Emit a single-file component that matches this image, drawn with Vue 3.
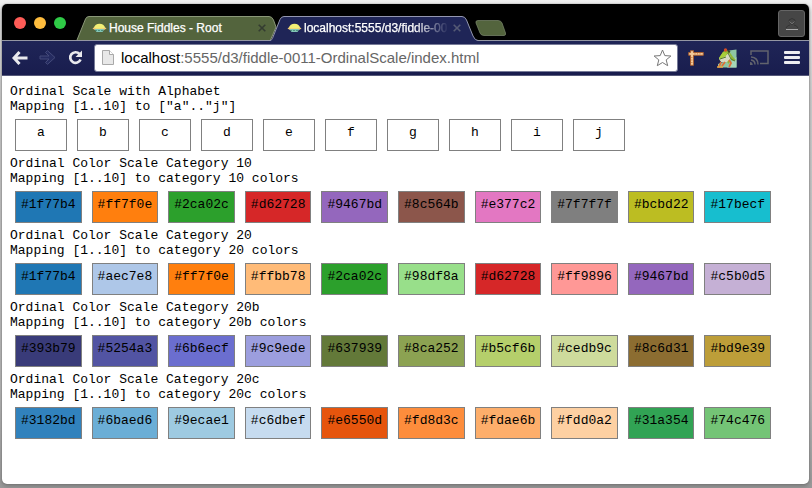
<script setup>
const letters = ['a', 'b', 'c', 'd', 'e', 'f', 'g', 'h', 'i', 'j']
const sections = [
  { name: '10', colors: ['#1f77b4', '#ff7f0e', '#2ca02c', '#d62728', '#9467bd', '#8c564b', '#e377c2', '#7f7f7f', '#bcbd22', '#17becf'] },
  { name: '20', colors: ['#1f77b4', '#aec7e8', '#ff7f0e', '#ffbb78', '#2ca02c', '#98df8a', '#d62728', '#ff9896', '#9467bd', '#c5b0d5'] },
  { name: '20b', colors: ['#393b79', '#5254a3', '#6b6ecf', '#9c9ede', '#637939', '#8ca252', '#b5cf6b', '#cedb9c', '#8c6d31', '#bd9e39'] },
  { name: '20c', colors: ['#3182bd', '#6baed6', '#9ecae1', '#c6dbef', '#e6550d', '#fd8d3c', '#fdae6b', '#fdd0a2', '#31a354', '#74c476'] }
]
const tabs = [
  { title: 'House Fiddles - Root', active: false },
  { title: 'localhost:5555/d3/fiddle-00', active: true }
]
</script>

<template>
  <div class="desktop">
    <div class="window">
      <header class="tabstrip">
        <div class="lights">
          <i class="light red"></i><i class="light yellow"></i><i class="light green"></i>
        </div>
        <div v-for="t in tabs" :key="t.title" class="tab" :class="{ active: t.active }">
          <svg class="tab-shape" width="207" height="26" viewBox="0 0 207 26">
            <template v-if="t.active">
              <path class="fill" d="M-2 24.500C-.5 24.500 .3 23 1 21L8 3.500Q9.200 .5 12 .5H190Q193 .5 194.500 4L201 20Q203 24.500 206 24.500V26H-2Z" />
              <path class="edge" d="M-2 24.500C-.5 24.500 .3 23 1 21L8 3.500Q9.200 .5 12 .5H190Q193 .5 194.500 4L201 20Q203 24.500 206 24.500" />
            </template>
            <template v-else>
              <path class="fill" d="M0 24L8.500 3Q9.500 .5 12 .5H192Q195 .5 196.500 4L199 11L193.500 24Z" />
              <path class="edge" d="M0 24L8.500 3Q9.500 .5 12 .5H192Q195 .5 196.500 4L199 11L193.500 24" />
            </template>
          </svg>
          <div class="tab-body">
            <svg class="favicon" width="15" height="10" viewBox="0 0 15 10">
              <path d="M.5 5.500L3 3.500H12L14.500 5.500L12 7H3Z" fill="#f1c777" />
              <path d="M2 4.500Q3 .8 7.500 .7Q12 .8 13 4.500L11 5.500H4Z" fill="#f2ef75" />
              <path d="M2.500 6H12.500L10.500 9H4.500Z" fill="#83c6b7" />
              <path d="M3 7.500H12" stroke="#397b68" stroke-width=".7" stroke-dasharray="2 1" />
            </svg>
            <span class="title">{{ t.title }}</span>
            <svg class="close" width="8" height="8" viewBox="0 0 8 8"><path d="M.7 .7L7.300 7.300M7.300 .7L.7 7.300" /></svg>
          </div>
        </div>
        <svg class="new-tab" width="32" height="16" viewBox="0 0 32 16">
          <path d="M3 .5H23Q26 .5 27 3L30.500 13Q31 15.500 29 15.500H9Q6 15.500 5 13L1 3Q.3 .5 3 .5Z" fill="#53643d" stroke="#7d8a6e" stroke-width=".7" />
        </svg>
        <div class="profile">
          <svg width="14" height="14" viewBox="0 0 14 14">
            <path d="M4 3Q7 0 10 3L9.500 6Q7 9 4.500 6ZM1 11Q2 8.500 5 8M9 8Q12 8.500 13 11" fill="none" stroke="#353535" />
            <path d="M4.500 4.500Q7 8.500 9.500 4.500" fill="none" stroke="#777" /><path d="M1 12.500H13" stroke="#aaa" />
          </svg>
        </div>
      </header>

      <nav class="toolbar">
        <svg class="back" width="16" height="14" viewBox="0 0 16 14"><path d="M7.500 1L2 7L7.500 13M2.500 7H15.500" fill="none" stroke="#e9e9ee" stroke-width="3" /></svg>
        <svg class="forward" width="17" height="15" viewBox="0 0 17 15"><path d="M1 6H10L6.500 2.500L8.500 .7L16 7.500L8.500 14.300L6.500 12.500L10 9H1Z" fill="#252b60" stroke="#454b7b" /></svg>
        <svg class="reload" width="15" height="15" viewBox="0 0 15 15"><path d="M11.500 4A5.300 5.300 0 1 0 12.500 9.500" fill="none" stroke="#e9e9ee" stroke-width="2.700" /><path d="M14 .5V7H7.500Z" fill="#e9e9ee" /></svg>
        <div class="address">
          <svg class="page-icon" width="12" height="15" viewBox="0 0 12 15"><path d="M.5 .5H7.500L11.500 4.500V14.500H.5Z" fill="#e8e8e8" stroke="#a9a9a9" /><path d="M7.500 .5V4.500H11.500" fill="#fff" stroke="#a9a9a9" /></svg>
          <span class="url"><b>localhost</b>:5555/d3/fiddle-0011-OrdinalScale/index.html</span>
          <svg class="star" width="19" height="18" viewBox="0 0 19 18"><path d="M9.500 1L11.800 6.600L17.900 7L13.200 10.900L14.700 16.700L9.500 13.500L4.300 16.700L5.800 10.900L1.100 7L7.200 6.600Z" fill="#fff" stroke="#777" stroke-linejoin="round" /></svg>
        </div>
        <svg class="ruler" width="16" height="16" viewBox="0 0 16 16"><path d="M2.500 .7H5.500V2.500H15.300V5.300H5.500V15.300H2.500V5.300H.7V2.500H2.500Z" fill="#f4c998" stroke="#a65e32" /><path d="M7 3V4.500M9.500 3V4.500M12 3V4.500M3 7.500H4.500M3 10H4.500M3 12.500H4.500" stroke="#c17945" stroke-width=".7" /></svg>
        <svg class="frog" width="20" height="20" viewBox="0 0 20 20">
          <path d="M12 2.500L19.500 1.500V19.500H1V16L6 14Z" fill="#8ec5a3" />
          <path d="M13 15L19.500 9V19.500H10Z" fill="#a6d6b8" />
          <path d="M6 4L8 2L12 3L16 9L19 12L16 13L13 10L12 16L8 12L3 13L2 10Z" fill="#91b735" />
          <path d="M2 10.500L8 8L12 5L14 10L10 14L4 14Z" fill="#d7dac2" />
          <path d="M2 10L6 4L10 5L9 8L3 11Z" fill="#a7cf3a" />
          <path d="M4 14L2 19M8 14L5 18M12 12L14 15L12 19" fill="none" stroke="#df6e36" stroke-width="1.800" />
          <path d="M11 5L14 11L18 13M3 11L9 9" fill="none" stroke="#57792f" />
          <path d="M0 19H6" stroke="#eda43e" stroke-width="1.500" />
          <circle cx="8.500" cy="2" r="1.700" fill="#d64d24" /><circle cx="12" cy="3.500" r="1.200" fill="#3d4a27" />
        </svg>
        <svg class="cast" width="19" height="15" viewBox="0 0 19 15"><path d="M1 5V1H18V13.500H10M1 7Q8 7.500 8 14.500M1 10Q5 10.500 5 14.500" fill="none" stroke="#62636d" stroke-width="1.500" /><path d="M0 12Q2.700 12 2.700 15H0Z" fill="#62636d" /></svg>
        <div class="menu"><i></i><i></i><i></i></div>
      </nav>

      <main class="page">
        <section>
          <div>Ordinal Scale with Alphabet</div>
          <div>Mapping [1..10] to ["a".."j"]</div>
          <div class="row"><div v-for="l in letters" :key="l" class="box letter">{{ l }}</div></div>
        </section>
        <section v-for="s in sections" :key="s.name">
          <div>Ordinal Color Scale Category {{ s.name }}</div>
          <div>Mapping [1..10] to category {{ s.name }} colors</div>
          <div class="row"><div v-for="c in s.colors" :key="c" class="box" :style="{ backgroundColor: c }">{{ c }}</div></div>
        </section>
      </main>
    </div>
  </div>
</template>

<style>
body { overflow: hidden; }
</style>

<style scoped>
* { box-sizing: border-box; }
svg { display: block; flex: none; }
.desktop { width: 812px; height: 488px; padding: 4px 3px 4px 2px; background: linear-gradient(#f0f0f0, #d2d2d2 20%, #bbb 80%, #999); }
.window { height: 480px; border-radius: 5px; overflow: hidden; background: #fff; box-shadow: 0 0 1px #555, 0 2px 4px #777; font-family: "Liberation Sans", Arial, sans-serif; }
.tabstrip { height: 37px; padding-top: 12px; background: #000; border-bottom: 1px solid #9497a4; display: flex; align-items: flex-start; }
.lights { display: flex; gap: 8px; padding: 1px 0 0 12px; width: 75px; flex: none; }
.light { width: 12px; height: 12px; border-radius: 50%; }
.red { background: #ff5c57; }
.yellow { background: #ffbd3e; }
.green { background: #2fcb47; }
.tab { display: grid; width: 195px; height: 26px; flex: none; }
.tab-shape { grid-area: 1 / 1; overflow: visible; }
.fill { fill: #53643d; }
.edge { fill: none; stroke: #8b9879; }
.active .fill { fill: #1f2557; }
.active .edge { stroke: #9497b0; }
.active { width: 207px; z-index: 1; }
.tab-body { grid-area: 1 / 1; display: flex; align-items: center; height: 24px; padding-left: 15px; z-index: 1; }
.title { width: 145px; margin-left: 2px; overflow: hidden; white-space: nowrap; font-size: 12px; line-height: 16px; color: #fff; -webkit-text-stroke: .25px #fff; }
.active .title { -webkit-mask-image: linear-gradient(90deg, #000 76%, transparent 100%); mask-image: linear-gradient(90deg, #000 76%, transparent 100%); }
.close { margin-left: 4px; stroke: #343c31; stroke-width: 1.600; }
.active .close { stroke: #555a75; }
.new-tab { margin: 4px 0 0 -4px; }
.profile { width: 27px; height: 27px; margin: -6px 4px 0 auto; border: 1px solid #656565; border-radius: 3px; background: #464646; display: flex; align-items: center; justify-content: center; }
.toolbar { height: 35px; padding: 0 10px; background: linear-gradient(#1f2557, #191d4e); border-bottom: 1px solid #555879; display: flex; align-items: center; }
.back { margin-top: -1px; }
.forward { margin: -1px 0 0 11px; }
.reload { margin: -1px 0 0 12px; }
.address { width: 584px; height: 28px; margin: 0 0 1px 11px; padding: 0 5px 0 7px; background: #fff; border: 1px solid #777b98; border-radius: 3px; display: flex; align-items: center; flex: none; }
.url { flex: 1; margin-left: 7px; font-size: 15px; line-height: 20px; color: #666; white-space: nowrap; }
.url b { font-weight: normal; color: #000; }
.ruler { margin-left: 10px; }
.frog { margin: -1px 0 0 13px; }
.cast { margin: -1px 0 0 13px; }
.menu { display: grid; gap: 2px; margin: -1px 0 0 15px; }
.menu i { width: 16px; height: 3px; background: #ededf0; border-radius: 1px; }
.page { padding: 8px; font: 13px/15px "Liberation Mono", "Courier New", monospace; color: #000; white-space: nowrap; }
.row { display: flex; gap: 10px; padding: 5px; }
.box { width: 66.610px; height: 32px; padding: 5px; border: 1px solid #808080; flex: none; }
.letter { width: 52px; text-align: center; }
</style>
